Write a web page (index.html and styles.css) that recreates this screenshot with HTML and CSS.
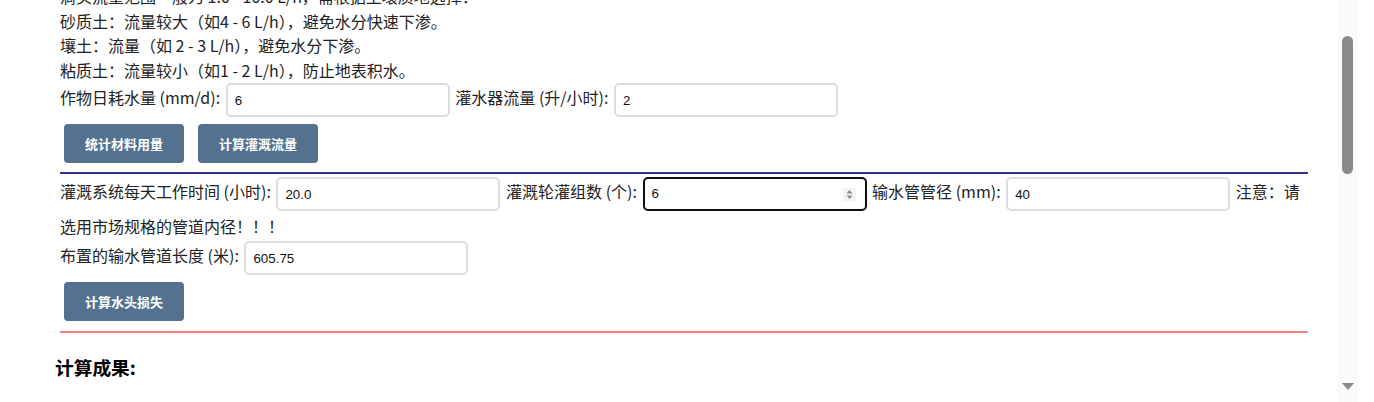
FILE: index.html
```html
<!DOCTYPE html>
<html lang="zh-CN">
<head>
    <meta charset="UTF-8">
    <meta name="viewport" content="width=device-width, initial-scale=1.0">
    <title>滴灌计算</title>
    <link rel="stylesheet" href="styles.css">
</head>
<body>
    <!-- page area (scrolled down a little) -->
    <div class="viewport">
        <div class="page">
            <section class="calc">
                <p class="tip">滴头流量范围一般为 1.0 - 10.0 L/h，需根据土壤质地选择：</p>
                <p class="tip">砂质土：流量较大（如4 - 6 L/h），避免水分快速下渗。</p>
                <p class="tip">壤土：流量（如 2 - 3 L/h），避免水分下渗。</p>
                <p class="tip">粘质土：流量较小（如1 - 2 L/h），防止地表积水。</p>

                <div class="field-row">
                    <label for="dailyUse">作物日耗水量 (mm/d):</label>
                    <input type="text" id="dailyUse" class="field" value="6">
                    <label for="emitterFlow">灌水器流量 (升/小时):</label>
                    <input type="text" id="emitterFlow" class="field" value="2">
                </div>

                <div class="btn-row">
                    <button type="button" class="btn">统计材料用量</button>
                    <button type="button" class="btn">计算灌溉流量</button>
                </div>

                <hr class="divider divider-blue">

                <div class="field-row">
                    <label for="workHours">灌溉系统每天工作时间 (小时):</label>
                    <input type="text" id="workHours" class="field" value="20.0">
                    <label for="groups">灌溉轮灌组数 (个):</label>
                    <span class="field field-focus">
                        <input type="text" id="groups" class="field-inner" value="6">
                        <svg class="spin" width="13" height="13" viewBox="0 0 13 13">
                            <rect width="13" height="13" fill="#f3f3f3"/>
                            <path d="M3.5 5.5 L6.5 2 L9.5 5.5 Z" fill="#8a8a8a"/>
                            <path d="M3.5 7.5 L6.5 11 L9.5 7.5 Z" fill="#8a8a8a"/>
                        </svg>
                    </span>
                    <label for="pipeSize">输水管管径 (mm):</label>
                    <input type="text" id="pipeSize" class="field" value="40">
                    <span class="note">注意：请选用市场规格的管道内径！！！</span>
                </div>

                <div class="field-row">
                    <label for="pipeLength">布置的输水管道长度 (米):</label>
                    <input type="text" id="pipeLength" class="field" value="605.75">
                </div>

                <div class="btn-row">
                    <button type="button" class="btn">计算水头损失</button>
                </div>

                <hr class="divider divider-red">
            </section>

            <h3 class="result-title">计算成果:</h3>
        </div>
    </div>

    <!-- scrollbar of the page area -->
    <div class="scrollbar">
        <div class="thumb"></div>
        <svg class="arrow" width="12" height="7" viewBox="0 0 12 7">
            <path d="M0 0 L12 0 L6 7 Z" fill="#8a8a8a"/>
        </svg>
    </div>
</body>
</html>
```

FILE: styles.css
```css
/* page */
body {
    margin: 0;
    padding-right: 17px;
    height: 402px;
    overflow: hidden;
    display: flex;
    background-color: #fff;
    color: #222;
    font-family: "Noto Sans CJK SC", "Noto Sans", sans-serif;
    font-size: 16px;
}

.viewport {
    flex: 1;
    overflow: hidden;
}

.page {
    margin-top: -16px;
    padding: 0 30px 0 55px;
}

.calc {
    padding-left: 5px;
}

.tip {
    margin: 0;
    line-height: 24.5px;
}

/* form rows */
.field-row {
    line-height: 24.5px;
}

.field-row label {
    color: #222;
}

.field {
    display: inline-block;
    box-sizing: border-box;
    width: 224px;
    height: 34px;
    margin: 1px 2px;
    padding: 0 7px;
    border: 2px solid #ddd;
    border-radius: 5px;
    vertical-align: middle;
    font-family: "Liberation Sans", Arial, sans-serif;
    font-size: 13.33px;
    color: #111;
    background: #fff;
    outline: none;
}

.field-focus {
    display: inline-flex;
    align-items: center;
    border-color: #101010;
    padding-right: 9px;
}

.field-inner {
    flex: 1;
    min-width: 0;
    border: none;
    padding: 0;
    font: inherit;
    color: inherit;
    background: transparent;
    outline: none;
}

.spin {
    display: block;
}

.note {
    line-height: 28px;
}

/* buttons */
.btn-row {
    display: flex;
    gap: 14px;
    padding: 6px 0 0 4px;
}

.btn {
    width: 120px;
    height: 39px;
    border: none;
    border-radius: 4px;
    background-color: #547190;
    color: #fff;
    font-family: "Noto Sans CJK SC", sans-serif;
    font-size: 13px;
    font-weight: bold;
    cursor: pointer;
}

.divider {
    border: none;
    height: 2px;
    margin: 9px 0 2px;
}

.divider-blue {
    background-color: #35338c;
}

.divider-red {
    margin-top: 10px;
    background-color: #f08080;
}

.result-title {
    margin: 20px 0 0 0;
    font-size: 18.72px;
    font-weight: bold;
    color: #000;
}

/* scrollbar */
.scrollbar {
    width: 19px;
    flex-shrink: 0;
    display: flex;
    flex-direction: column;
    align-items: center;
    padding-top: 36px;
    box-sizing: border-box;
    background-color: #fafafa;
}

.thumb {
    width: 11px;
    height: 138px;
    border-radius: 6px;
    background-color: #8a8a8a;
}

.arrow {
    margin-top: auto;
    margin-bottom: 12px;
}
```
